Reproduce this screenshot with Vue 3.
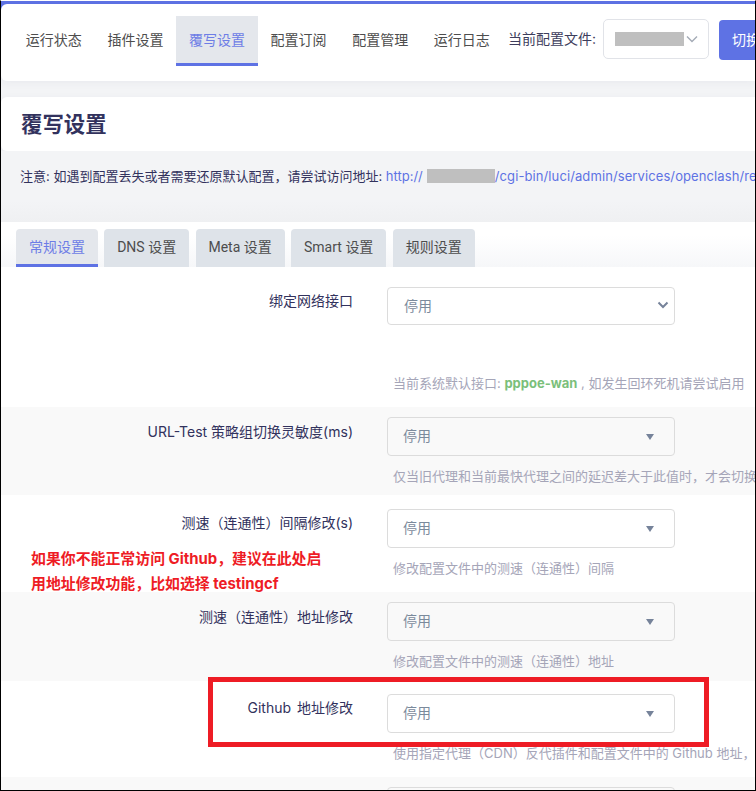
<script setup>
const LP = '\uFF08'
const RP = '\uFF09'
const CM = '\uFF0C'
const navItems = [
  { label: '运行状态' },
  { label: '插件设置' },
  { label: '覆写设置', active: true },
  { label: '配置订阅' },
  { label: '配置管理' },
  { label: '运行日志' }
]
const tabs = [
  { label: '常规设置', active: true },
  { label: 'DNS 设置' },
  { label: 'Meta 设置' },
  { label: 'Smart 设置' },
  { label: '规则设置' }
]
const rows = [
  { label: 'URL-Test 策略组切换灵敏度(ms)', help: `仅当旧代理和当前最快代理之间的延迟差大于此值时${CM}才会切换`, h: 88 },
  { label: `测速${LP}连通性${RP}间隔修改(s)`, help: `修改配置文件中的测速${LP}连通性${RP}间隔`, h: 97, white: true, pad: 14 },
  { label: `测速${LP}连通性${RP}地址修改`, help: `修改配置文件中的测速${LP}连通性${RP}地址`, h: 89 },
  { label: 'Github 地址修改', help: `使用指定代理${LP}CDN${RP}反代插件和配置文件中的 Github 地址${CM}`, h: 96, white: true, pad: 13, spaced: true }
]
const notice = `注意: 如遇到配置丢失或者需要还原默认配置${CM}请尝试访问地址: `
const redLine1 = `如果你不能正常访问 Github${CM}建议在此处启`
const redLine2 = `用地址修改功能${CM}比如选择 testingcf`
</script>

<template>
  <div class="page">
    <div class="topline"></div>
    <nav class="navcard">
      <a v-for="n in navItems" :key="n.label" class="navitem" :class="{ active: n.active }">{{ n.label }}</a>
      <span class="cfg-label">当前配置文件:</span>
      <div class="cfg-select">
        <span class="redact cfg-redact"></span>
        <svg class="chev" width="12" height="8" viewBox="0 0 12 8"><path d="M1 1.5 L6 6.5 L11 1.5" fill="none" stroke="#a4abb6" stroke-width="1.4"/></svg>
      </div>
      <button class="switch">切换</button>
    </nav>
    <header class="titlecard"><h2>覆写设置</h2></header>
    <div class="notice">
      <span>{{ notice }}</span>
      <a class="link">http://<span class="redact link-redact"></span><span class="path">/cgi-bin/luci/admin/services/openclash/re</span></a>
    </div>
    <main class="content">
      <div class="tabs">
        <a v-for="t in tabs" :key="t.label" class="tab" :class="{ active: t.active }">{{ t.label }}</a>
      </div>
      <section class="row first">
        <div class="label">绑定网络接口</div>
        <div class="field">
          <div class="select native">
            <span>停用</span>
            <svg width="12" height="8" viewBox="0 0 12 8"><path d="M1.5 1.5 L6 6 L10.5 1.5" fill="none" stroke="#76839a" stroke-width="2"/></svg>
          </div>
          <p class="help first-help">当前系统默认接口: <b class="green">pppoe-wan</b> , 如发生回环死机请尝试启用</p>
        </div>
      </section>
      <section
        v-for="r in rows"
        :key="r.label"
        class="row"
        :class="{ white: r.white, spaced: r.spaced }"
        :style="{ height: r.h + 'px', paddingTop: (r.pad || 10) + 'px' }"
      >
        <div class="label">{{ r.label }}</div>
        <div class="field">
          <div class="select">
            <span>停用</span>
            <i class="tri"></i>
          </div>
          <p class="help">{{ r.help }}</p>
        </div>
      </section>
      <section class="row">
        <div class="label"></div>
        <div class="field"><div class="select"></div></div>
      </section>
    </main>
    <div class="red-note">{{ redLine1 }}<br>{{ redLine2 }}</div>
    <div class="red-box"></div>
  </div>
</template>

<style scoped>
.page {
  position: relative;
  width: 756px;
  height: 791px;
  box-sizing: border-box;
  overflow: hidden;
  background: #f3f4f6;
  border-top: 1px solid #fff;
  border-left: 1px solid #000;
  border-right: 1px solid #000;
  border-bottom: 1px solid #000;
  font-family: Inter, "Noto Sans CJK SC", sans-serif;
  font-size: 14px;
  color: #525f7f;
}
.topline { height: 9px; margin-bottom: -6px; background: #5e72e4; }
.navcard {
  display: flex;
  align-items: flex-start;
  height: 77px;
  box-sizing: border-box;
  padding: 12px 0 0 12px;
  background: #fff;
  border-radius: 6px 0 0 6px;
  box-shadow: 0 2px 8px rgba(50, 50, 93, .05);
  white-space: nowrap;
}
.navitem {
  width: 81.6px;
  flex: none;
  height: 50px;
  box-sizing: border-box;
  border-bottom: 3px solid transparent;
  padding-bottom: 2px;
  display: flex;
  align-items: center;
  justify-content: center;
  color: #4d4d4d;
}
.navitem.active { background: #e4e7ec; color: #6d7de6; border-bottom-color: #5e72e4; }
.cfg-label {
  width: 93.4px;
  flex: none;
  height: 47px;
  line-height: 45px;
  color: #3d3d5c;
  text-align: right;
}
.cfg-select {
  flex: none;
  width: 106px;
  height: 40px;
  box-sizing: border-box;
  margin: 3px 0 0 7px;
  border: 1px solid #e1e3e8;
  border-radius: 5px;
  display: flex;
  align-items: center;
  padding-left: 11px;
  gap: 2px;
}
.redact { display: inline-block; background: #bfbfbf; }
.cfg-redact { width: 69px; height: 14px; }
.chev { flex: none; }
.switch {
  flex: none;
  width: 90px;
  height: 40px;
  margin: 4px 0 0 10px;
  border: 0;
  border-radius: 4px;
  background: #5e72e4;
  color: #fff;
  font: inherit;
  text-align: left;
  padding: 0 0 2px 13px;
}
.titlecard {
  margin-top: 16px;
  height: 54px;
  box-sizing: border-box;
  padding: 0 0 3px 20px;
  background: #fff;
  border-radius: 6px 0 0 6px;
  box-shadow: 0 2px 8px rgba(50, 50, 93, .05);
  display: flex;
  align-items: center;
}
h2 { margin: 0; font-size: 21.4px; font-weight: 700; color: #32325d; }
.notice {
  height: 71px;
  box-sizing: border-box;
  padding: 15px 0 0 19px;
  font-size: 13px;
  line-height: 20px;
  white-space: nowrap;
  color: #32325d;
  background: linear-gradient(#f3f4f6 70%, #eff0f2);
}
.link { color: #5e72e4; }
.path { letter-spacing: .1px; }
.link-redact { width: 68px; height: 14px; margin-left: 4px; vertical-align: -2px; }
.content { background: #fff; border-radius: 6px 0 0 0; }
.tabs {
  display: flex;
  gap: 6.5px;
  height: 45px;
  box-sizing: border-box;
  padding: 7px 0 0 15px;
  background: linear-gradient(#fff 30%, #f6f7f9);
}
.tab {
  height: 38px;
  padding: 0 12.9px 5px;
  box-sizing: border-box;
  display: flex;
  align-items: center;
  background: #dee3e9;
  border-radius: 4px 4px 0 0;
  color: #4d4d4d;
  font-family: Roboto, "Noto Sans CJK SC", sans-serif;
}
.tab.active { background: #e4e7ec; color: #6d7de6; padding-bottom: 2px; border-bottom: 3px solid #5e72e4; }
.row {
  display: flex;
  background: #f9f9f9;
  padding-top: 10px;
  box-sizing: border-box;
  white-space: nowrap;
}
.row.white, .row.first { background: #fff; }
.row.first { height: 140px; padding-top: 20px; }
.row.white .label, .row.first .label { padding-top: 4px; }
.row.spaced .label { word-spacing: 2px; }
.label {
  width: 352px;
  flex: none;
  padding-top: 5px;
  text-align: right;
  line-height: 20px;
  color: #32325d;
}
.field { margin-left: 34px; }
.select {
  width: 288px;
  height: 39px;
  box-sizing: border-box;
  border: 1px solid #dcdcdc;
  border-radius: 4px;
  display: flex;
  align-items: center;
  justify-content: space-between;
  padding: 0 20px 3px 15px;
  color: #7b8a9c;
}
.select.native { height: 38px; padding: 0 5px 3px 16px; }
.tri {
  width: 0;
  height: 0;
  margin-top: 3px;
  border-left: 4px solid transparent;
  border-right: 4px solid transparent;
  border-top: 6px solid #76839a;
}
.help {
  margin: 10px 0 0 6px;
  font-size: 13px;
  line-height: 20px;
  color: #a5a5b8;
}
.first-help { margin-top: 48px; }
.green { color: #7bbf7b; font-weight: 700; }
.red-note {
  position: absolute;
  left: 30px;
  top: 546px;
  font-size: 14.9px;
  line-height: 25px;
  font-weight: 700;
  color: #ee1c25;
  white-space: nowrap;
}
.red-box {
  position: absolute;
  left: 207px;
  top: 676px;
  width: 501px;
  height: 70px;
  box-sizing: border-box;
  border: 5px solid #ee1c25;
}
</style>

<style>
body { margin: 0; }
</style>
